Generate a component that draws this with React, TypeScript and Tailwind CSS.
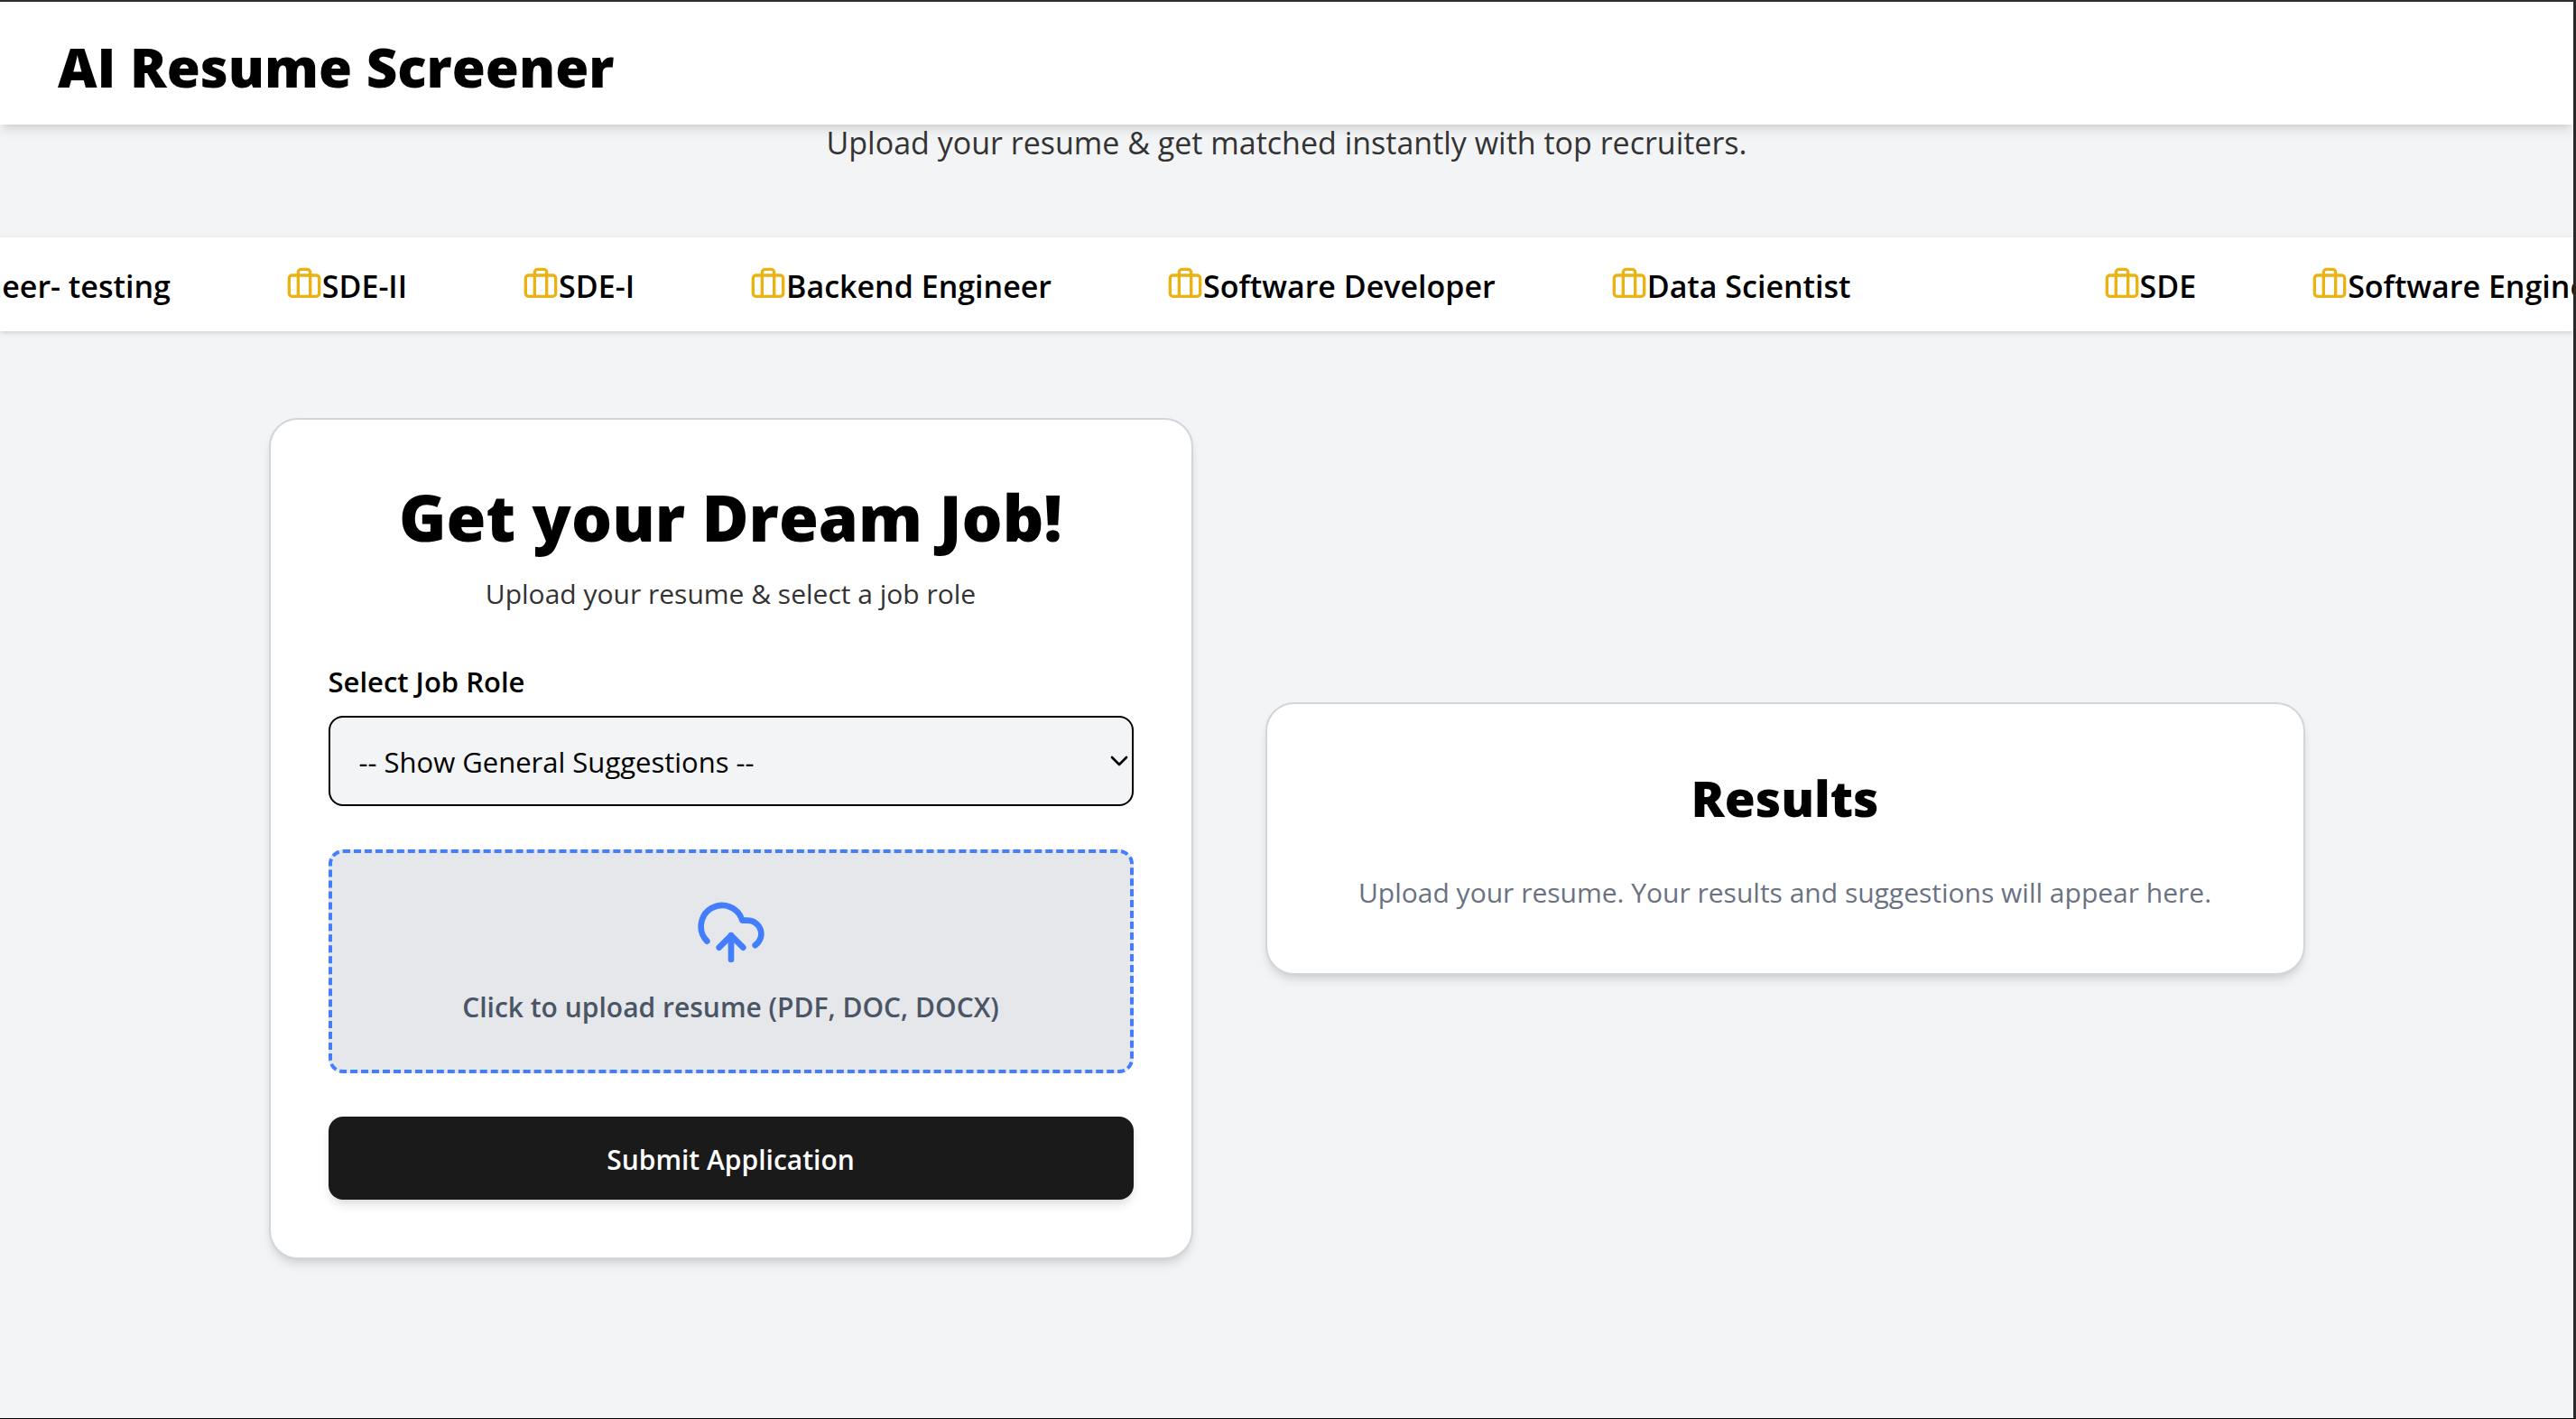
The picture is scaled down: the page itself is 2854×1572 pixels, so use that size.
import React, { useState } from "react";
import { Briefcase, ChevronDown, CloudUpload } from "lucide-react";

const openings = [
  { title: "Software Engineer- testing", gap: "mr-32" },
  { title: "SDE-II", gap: "mr-32" },
  { title: "SDE-I", gap: "mr-32" },
  { title: "Backend Engineer", gap: "mr-32" },
  { title: "Software Developer", gap: "mr-32" },
  { title: "Data Scientist", gap: "mr-70" },
  { title: "SDE", gap: "mr-32" },
  { title: "Software Engineer- testing", gap: "mr-32" },
];

const roles = ["SDE", "SDE-I", "SDE-II", "Backend Engineer", "Software Developer", "Data Scientist"];

function Header() {
  return (
    <header className="relative z-10 bg-white px-16 pt-8 pb-6 shadow-[0_8px_12px_-2px_rgba(0,0,0,0.1),0_4px_8px_-4px_rgba(0,0,0,0.1)]">
      <h1 className="text-[60px] leading-[80px] font-extrabold text-black">AI Resume Screener</h1>
    </header>
  );
}

function Ticker() {
  return (
    <section
      aria-label="Open positions"
      className="mt-[85px] flex overflow-hidden bg-white pt-8 pb-7 shadow-[0_2px_6px_rgba(0,0,0,0.1),0_2px_4px_-2px_rgba(0,0,0,0.1)]"
    >
      <ul className="-ml-[284px] flex shrink-0 whitespace-nowrap">
        {openings.map((o, i) => (
          <li key={i} className={`flex items-start text-[34px] leading-11 font-semibold text-black ${o.gap}`}>
            <Briefcase className="size-10 shrink-0 text-[#eab212]" strokeWidth={2} aria-hidden />
            {o.title}
          </li>
        ))}
      </ul>
    </section>
  );
}

function ApplicationForm() {
  const [role, setRole] = useState("");
  return (
    <form
      onSubmit={(e) => e.preventDefault()}
      className="w-full max-w-5xl rounded-[32px] border-2 border-gray-300 bg-white p-16 shadow-[0_8px_12px_-2px_rgba(0,0,0,0.1),0_4px_8px_-4px_rgba(0,0,0,0.1)]"
    >
      <h2 className="text-center text-[71px] leading-[88px] font-extrabold text-black">Get your Dream Job!</h2>
      <p className="mt-4 text-center text-[30px] leading-[50px] text-[#333333]">
        Upload your resume &amp; select a job role
      </p>
      <div className="mt-12">
        <label htmlFor="role" className="block text-[31px] leading-12 font-semibold text-black">
          Select Job Role
        </label>
        <div className="relative mt-[14px]">
          <select
            id="role"
            value={role}
            onChange={(e) => setRole(e.target.value)}
            className="h-25 w-full appearance-none rounded-2xl border-2 border-black bg-gray-100 px-8 pt-[2px] text-[31px] text-black"
          >
            <option value="">-- Show General Suggestions --</option>
            {roles.map((r) => (
              <option key={r} value={r}>
                {r}
              </option>
            ))}
          </select>
          <ChevronDown
            className="pointer-events-none absolute top-1/2 right-0 size-8 -translate-y-1/2 text-black"
            strokeWidth={2}
            aria-hidden
          />
        </div>
      </div>
      <label
        htmlFor="resume"
        className="mt-12 flex cursor-pointer flex-col items-center rounded-2xl border-4 border-dashed border-[#437eff] bg-gray-200 px-12 pt-12 pb-11"
      >
        <CloudUpload className="size-20 text-[#437eff]" strokeWidth={2} aria-hidden />
        <span className="mt-[18px] text-[30px] leading-[50px] font-semibold text-gray-600">
          Click to upload resume (PDF, DOC, DOCX)
        </span>
        <input id="resume" type="file" accept=".pdf,.doc,.docx" className="sr-only" />
      </label>
      <button
        type="submit"
        className="mt-12 w-full rounded-2xl bg-[#1a1a1a] pt-6 pb-5 text-[30px] leading-12 font-semibold text-white shadow-[0_8px_12px_-2px_rgba(0,0,0,0.1),0_4px_8px_-4px_rgba(0,0,0,0.1)]"
      >
        Submit Application
      </button>
    </form>
  );
}

function Results() {
  return (
    <section className="w-full max-w-6xl rounded-[32px] border-2 border-gray-300 bg-white p-16 text-center shadow-[0_8px_12px_-2px_rgba(0,0,0,0.1),0_4px_8px_-4px_rgba(0,0,0,0.1)]">
      <h2 className="text-[55px] leading-20 font-extrabold text-black">Results</h2>
      <p className="mt-10 text-[30px] leading-[50px] text-gray-500">
        Upload your resume. Your results and suggestions will appear here.
      </p>
    </section>
  );
}

export default function App() {
  return (
    <div className="min-h-screen border-t-2 border-r-3 border-b border-t-[#2e2d33] border-r-[#2a2a2c] border-b-black bg-gray-100 font-['Open_Sans','Noto_Sans',sans-serif]">
      <Header />
      <main>
        <p className="text-center text-[34px] leading-10 text-[#333333]">
          Upload your resume &amp; get matched instantly with top recruiters.
        </p>
        <Ticker />
        <div className="flex items-center justify-center gap-20 px-8 py-24">
          <ApplicationForm />
          <Results />
        </div>
      </main>
    </div>
  );
}
